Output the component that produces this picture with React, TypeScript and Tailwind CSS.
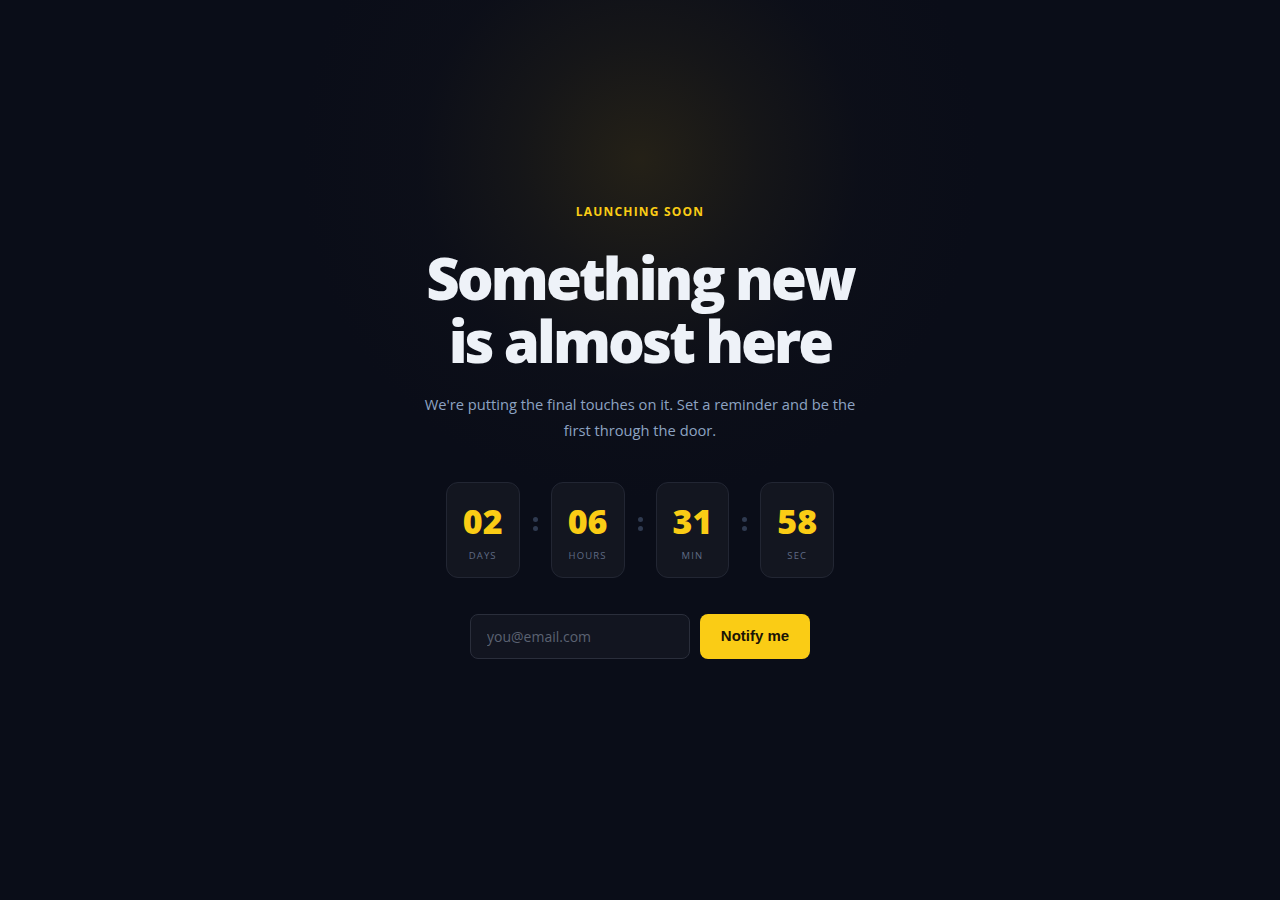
import React from "react";

const units = [
  { v: "02", l: "DAYS" },
  { v: "06", l: "HOURS" },
  { v: "31", l: "MIN" },
  { v: "58", l: "SEC" },
];

export default function App() {
  return (
    <div
      className="relative min-h-[900px] w-full overflow-hidden bg-[#0a0d18]"
      style={{ fontFamily: '"Open Sans", "Noto Sans", sans-serif' }}
    >
      <div className="pointer-events-none absolute left-[300px] top-[-180px] h-[680px] w-[680px] bg-[radial-gradient(closest-side,rgba(62,52,22,0.5)_0%,rgba(40,36,24,0.38)_35%,rgba(22,22,26,0.18)_65%,rgba(10,13,24,0)_100%)]" />
      <div className="relative flex flex-col items-center pt-[203px]">
        <div className="text-[12px] font-bold tracking-[0.1em] text-[#facc15]">LAUNCHING SOON</div>
        <h1 className="mt-[25px] text-center text-[58px] font-extrabold leading-[63px] tracking-[-0.05em] text-[#eef2f8]">
          Something new
          <br />
          is almost here
        </h1>
        <p className="mt-[19px] max-w-[440px] text-center text-[14.7px] leading-[26px] text-[#8da3c2]">
          We're putting the final touches on it. Set a reminder and be the first through the door.
        </p>
        <div className="mt-[39px] flex items-start gap-[13px]">
          {units.map((u, i) => (
            <React.Fragment key={u.l}>
              {i > 0 && (
                <div className="mt-[35px] flex flex-col gap-[4px]">
                  <span className="h-[5px] w-[5px] rounded-full bg-[#2f3a50]" />
                  <span className="h-[5px] w-[5px] rounded-full bg-[#2f3a50]" />
                </div>
              )}
              <div className="flex h-[96px] min-w-[71px] flex-col items-center rounded-[12px] border border-[#222633] bg-[#131620] px-[16px] pt-[18px]">
                <div className="text-[34px] font-extrabold leading-[40px] text-[#facc15]">{u.v}</div>
                <div className="mt-[8px] text-[9.5px] tracking-[0.12em] text-[#5f6b84]">{u.l}</div>
              </div>
            </React.Fragment>
          ))}
        </div>
        <div className="mt-[36px] flex gap-[10px]">
          <input
            placeholder="you@email.com"
            className="h-[45px] w-[220px] rounded-[8px] border border-[#2a2e3b] bg-[#121520] px-[16px] text-[14px] text-[#e5e7eb] outline-none placeholder:text-[#5b6272]"
          />
          <button
            className="h-[45px] w-[110px] rounded-[8px] bg-[#facc15] text-[15px] font-bold text-[#1a1406]"
            style={{ fontFamily: '"Liberation Sans", Arial, sans-serif' }}
          >
            Notify me
          </button>
        </div>
      </div>
    </div>
  );
}
